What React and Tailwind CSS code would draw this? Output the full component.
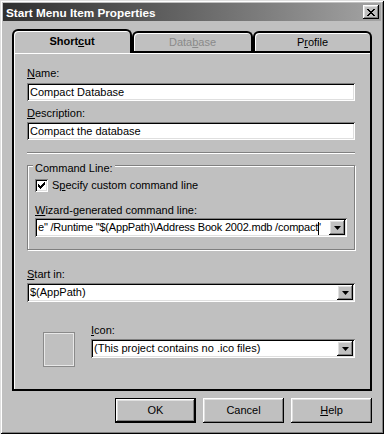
const RAISED = 'shadow-[inset_-1px_-1px_0_#000,inset_1px_1px_0_#fff,inset_-2px_-2px_0_#808080,inset_2px_2px_0_#dfdfdf]'
const SUNKEN = 'shadow-[inset_1px_1px_0_#808080,inset_-1px_-1px_0_#fff,inset_2px_2px_0_#000,inset_-2px_-2px_0_#dfdfdf]'

function Arrow() {
  return (
    <svg width="7" height="4" viewBox="0 0 7 4" className="block">
      <path d="M0 0h7L3.5 4z" fill="#000" />
    </svg>
  )
}

function TextField({ value }) {
  return (
    <div className={`h-[18px] w-full bg-white ${SUNKEN} pl-[3px] flex items-center text-black overflow-hidden whitespace-nowrap`}>
      {value}
    </div>
  )
}

function Combo({ children, width = 'w-full', textClass = '' }) {
  return (
    <div className={`h-[19px] ${width} bg-white ${SUNKEN} flex items-center pl-[3px] pr-[2px] overflow-hidden`}>
      <div className={`flex-1 min-w-0 overflow-hidden whitespace-nowrap text-black ${textClass}`}>{children}</div>
      <div className={`w-[16px] h-[15px] shrink-0 bg-[#c0c0c0] ${RAISED} flex items-center justify-center`}>
        <Arrow />
      </div>
    </div>
  )
}

function Label({ children, className = '' }) {
  return <div className={`h-[13px] leading-[13px] text-black ${className}`}>{children}</div>
}

function Button({ children, primary }) {
  return (
    <div className={`w-[81px] h-[25px] flex items-center justify-center bg-[#c0c0c0] text-black ${primary ? 'border border-black shadow-[inset_-1px_-1px_0_#000,inset_1px_1px_0_#fff,inset_-2px_-2px_0_#808080,inset_2px_2px_0_#dfdfdf]' : RAISED}`}>
      {children}
    </div>
  )
}

export default function App() {
  return (
    <div
      className="w-[384px] h-[434px] bg-[#c0c0c0] p-[3px] flex flex-col text-[11px] shadow-[inset_1px_1px_0_#dfdfdf,inset_-1px_-1px_0_#000,inset_2px_2px_0_#fff,inset_-2px_-2px_0_#808080]"
      style={{ fontFamily: '"Liberation Sans", Arial, sans-serif' }}
    >
      {/* Title bar */}
      <div className="h-[18px] flex items-center justify-between bg-linear-to-r from-[#303030] to-[#a4a4a4]">
        <span className="pl-[3px] text-white font-bold text-[11.75px] leading-[13px]">Start Menu Item Properties</span>
        <div className={`mr-[2px] w-[16px] h-[14px] bg-[#c0c0c0] ${RAISED} flex items-center justify-center`}>
          <svg width="8" height="7" viewBox="0 0 8 7" className="block">
            <path d="M0 0h2v1h1v1h2V1h1V0h2v1H7v1H6v1H5v1h1v1h1v1h1v1H6V6H5V5H3v1H2v1H0V6h1V5h1V4h1V3H2V2H1V1H0z" fill="#000" />
          </svg>
        </div>
      </div>

      {/* Tabs */}
      <div className="mt-[8px] ml-[9px] flex items-end h-[22px]">
        <div className="relative z-10 w-[120px] h-[24px] -mb-[2px] bg-[#c0c0c0] border-t-2 border-l-2 border-r-2 border-black rounded-t-[6px] shadow-[inset_1px_1px_0_#fff] flex items-center justify-center pb-[2px] font-bold text-black">
          Short<u>c</u>ut
        </div>
        <div className="w-[121px] h-[20px] bg-[#c0c0c0] border-t-2 border-l-2 border-r-2 border-black rounded-t-[6px] shadow-[inset_1px_1px_0_#fff] flex items-center justify-center text-[#8a8a8a]">
          Data<u>b</u>ase
        </div>
        <div className="w-[119px] h-[20px] bg-[#c0c0c0] border-t-2 border-l-2 border-r-2 border-black rounded-t-[6px] shadow-[inset_1px_1px_0_#fff] flex items-center justify-center text-black">
          P<u>r</u>ofile
        </div>
      </div>

      {/* Panel */}
      <div className="ml-[9px] w-[360px] h-[340px] border-2 border-black shadow-[inset_1px_1px_0_#fff] pl-[13px] pt-[14px]">
        <div className="w-[328px] flex flex-col">
          <Label><u>N</u>ame:</Label>
          <div className="mt-[3px]"><TextField value="Compact Database" /></div>
          <Label className="mt-[6px]"><u>D</u>escription:</Label>
          <div className="mt-[2px]"><TextField value="Compact the database" /></div>

          <div className="mt-[12px] h-[2px] border-t border-[#808080] border-b border-b-white" />

          {/* Command Line group */}
          <div className="relative mt-[11px] border border-[#808080] shadow-[inset_1px_1px_0_#fff,1px_1px_0_#fff] pl-[7px] pt-[13px] pb-[12px]">
            <span className="absolute -top-[4px] left-[5px] px-[2px] bg-[#c0c0c0] leading-[13px] text-black">Command Line:</span>
            <div className="flex items-center h-[13px]">
              <div className={`w-[13px] h-[13px] bg-white ${SUNKEN} flex items-center justify-center`}>
                <svg width="7" height="7" viewBox="0 0 7 7" className="block">
                  <path d="M6 0h1v3H6v1H5v1H4v1H3v1H2V6H1V5H0V2h1v1h1v1h1V3h1V2h1V1h1z" fill="#000" />
                </svg>
              </div>
              <span className="ml-[4px] leading-[13px] text-black">S<u>p</u>ecify custom command line</span>
            </div>
            <Label className="mt-[12px]"><u>W</u>izard-generated command line:</Label>
            <div className="mt-[1px]">
              <Combo width="w-[312px]" textClass="tracking-[-0.2px]">
                e" /Runtime "$(AppPath)\Address Book 2002.mdb /compact<span className="inline-block w-px h-[13px] bg-black align-middle" />'
              </Combo>
            </div>
          </div>

          <Label className="mt-[18px]"><u>S</u>tart in:</Label>
          <div className="mt-[2px]"><Combo>$(AppPath)</Combo></div>

          {/* Icon row */}
          <div className="mt-[22px] flex items-start">
            <div className="ml-[16px] mt-[8px] w-[32px] h-[35px] border border-[#8a8a8a] shadow-[inset_1px_1px_0_#e8e8e8,inset_-1px_-1px_0_#e8e8e8]" />
            <div className="ml-[16px] flex-1 flex flex-col">
              <Label><u>I</u>con:</Label>
              <div className="mt-[2px]"><Combo>(This project contains no .ico files)</Combo></div>
            </div>
          </div>
        </div>
      </div>

      {/* Buttons */}
      <div className="mt-[7px] ml-[112px] flex gap-[7px]">
        <Button primary>OK</Button>
        <Button>Cancel</Button>
        <Button><u>H</u>elp</Button>
      </div>
    </div>
  )
}
